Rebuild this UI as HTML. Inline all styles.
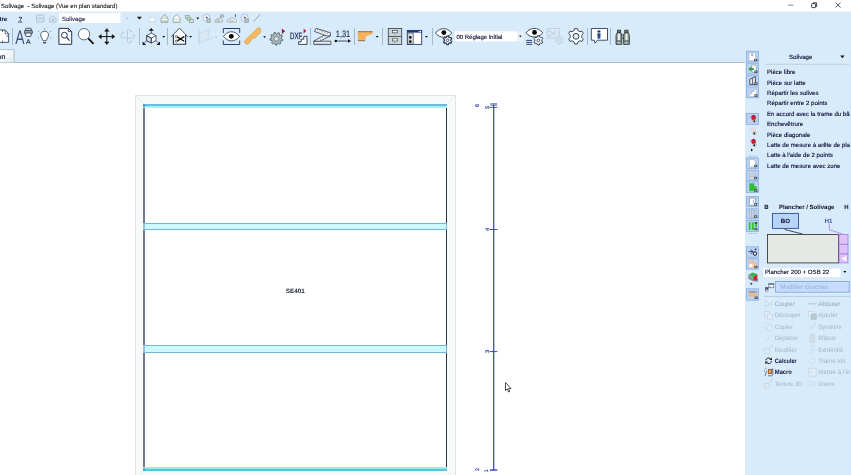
<!DOCTYPE html>
<html><head><meta charset="utf-8">
<style>
*{margin:0;padding:0;box-sizing:border-box}
html,body{width:851px;height:475px;overflow:hidden;background:#fff;font-family:"Liberation Sans",sans-serif;}
#app{position:relative;width:851px;height:475px;overflow:hidden;background:#fff}
.abs{position:absolute}
#title{left:0;top:0;width:851px;height:12px;background:#fff}
#title .t{will-change:transform;left:1px;top:1.7px;font-size:6.05px;line-height:10px;color:#111;white-space:pre;-webkit-text-stroke:0.08px #111;text-rendering:geometricPrecision}
#tb{left:0;top:12px;width:851px;height:50px;background:#d8ebfa}
#tbline{left:0;top:62px;width:745px;height:1px;background:#a9bec8}
#rp{left:745px;top:50px;width:106px;height:425px;background:#d8ebfa}
.txt{position:absolute;white-space:nowrap;font-size:7px;line-height:10px;color:#10103a}
svg{position:absolute;left:0;top:0;overflow:visible;will-change:transform}
svg text{text-rendering:geometricPrecision}
</style></head><body>
<div id="app">
<div id="title" class="abs"><div class="abs t">Solivage  - Solivage (Vue en plan standard)</div></div>
<div class="abs" style="left:0;top:11px;width:851px;height:1px;background:#edf5fd"></div>
<div id="tb" class="abs"></div>
<div id="tbline" class="abs"></div>
<div id="rp" class="abs"></div>
<svg id="cv" width="851" height="475" viewBox="0 0 851 475">
<g shape-rendering="crispEdges">
<rect x="135.5" y="95.5" width="320" height="390" fill="#f8fafa" stroke="#dbe3e3" stroke-width="1"/>
<rect x="145" y="104" width="301" height="367" fill="#fff"/>
</g>
<path d="M135.5 95.5L144 104M455.5 95.5L447 104M135.5 479.5L144 471M455.5 479.5L447 471" stroke="#e3e8ec" stroke-width="0.9" fill="none"/>
<g shape-rendering="crispEdges">
<rect x="143" y="104" width="2" height="367" fill="#717a88"/>
<rect x="446" y="104" width="1" height="367" fill="#2c3650"/>
<!-- beams -->
<rect x="143" y="104" width="304" height="2" fill="#6abcde"/>
<rect x="143" y="106" width="304" height="2" fill="#a4f2ec"/>
<rect x="143" y="104" width="2" height="3" fill="#4a98e0"/>
<rect x="143" y="223" width="304" height="7" fill="#cdf9fc"/><rect x="143" y="223" width="304" height="1" fill="#70b8d0"/><rect x="143" y="229" width="304" height="1" fill="#70b8d0"/><rect x="143" y="223" width="2" height="7" fill="#8cc6ee"/><rect x="446" y="223" width="1" height="7" fill="#6cb4e6"/>
<rect x="143" y="345" width="304" height="8" fill="#cdf9fc"/><rect x="143" y="345" width="304" height="1" fill="#70b8d0"/><rect x="143" y="352" width="304" height="1" fill="#70b8d0"/><rect x="143" y="345" width="2" height="8" fill="#8cc6ee"/><rect x="446" y="345" width="1" height="8" fill="#6cb4e6"/>
<rect x="143" y="467" width="304" height="2" fill="#98f0e4"/>
<rect x="143" y="469" width="304" height="2" fill="#68badf"/>
<rect x="143" y="468" width="2" height="3" fill="#58a8e4"/>
</g>
<text x="295.3" y="293.4" font-size="6.3" font-weight="bold" fill="#222a38" text-anchor="middle" font-family="Liberation Sans, sans-serif">SE401</text>
<!-- dimension -->
<g stroke="#3848b4" fill="none">
<path d="M493.7 104.5V470" stroke-width="1.25"/>
<path d="M489.6 229.5H497.4M489.6 351.6H497.4" stroke-width="1"/>
<path d="M490.2 105.1H497.2M489.4 107.4H497.2" stroke-width="0.9"/>
<path d="M490 470H497.2" stroke-width="1.5"/>
</g>
<rect x="490.3" y="103" width="6.8" height="1.5" fill="#8e9cae"/>
<g font-family="Liberation Sans, sans-serif" font-size="5.2" fill="#2a3aa8" stroke="#2a3aa8" stroke-width="0.2">
<text transform="translate(478.6,105.6) rotate(-90)" text-anchor="middle">6</text>
<text transform="translate(489.2,107.2) rotate(-90)" text-anchor="middle">5</text>
<text transform="translate(489,229.4) rotate(-90)" text-anchor="middle">4</text>
<text transform="translate(489,351.4) rotate(-90)" text-anchor="middle">3</text>
<text transform="translate(478.6,469.6) rotate(-90)" text-anchor="middle">2</text>
<text transform="translate(488.4,470.8) rotate(-90)" text-anchor="middle">1</text>
</g>
<!-- cursor -->
<path d="M505.5 382.5V390.5L507.3 389L508.6 392L509.8 391.5L508.6 388.6H511Z" fill="#fff" stroke="#222" stroke-width="0.8" stroke-linejoin="round"/>
</svg>
<svg id="tbs" width="851" height="64" viewBox="0 0 851 64" font-family="Liberation Sans, sans-serif">
<!-- menu row -->
<text x="-4" y="20.8" font-size="6.1" font-weight="bold" fill="#10103a">être</text>
<text x="18.4" y="20.8" font-size="6.1" font-weight="bold" fill="#10103a">?</text>
<rect x="18.2" y="21.6" width="4" height="0.8" fill="#10103a"/>
<g stroke="#a9bdd2" fill="none" stroke-width="0.9">
<rect x="36.5" y="15" width="7.5" height="7" rx="1" fill="#d2e4f4"/>
<path d="M38 18.5H42.5"/>
<path d="M49.5 22V18.5L52.7 16L56 18.5V22Z" fill="#e0edf9"/>
<path d="M51.3 19.3H54.2L52.7 21Z" fill="#b4c6d8"/>
</g>
<rect x="59" y="13" width="61.5" height="10" fill="#fff"/>
<text x="61.9" y="20.5" font-size="6.1" fill="#10103a" stroke="#10103a" stroke-width="0.08">Solivage</text>
<path d="M125.3 19.3L127.2 17L129.1 19.3Z" fill="#bccbdc"/>
<path d="M136.9 16.7H141.9L139.4 19.6Z" fill="#111"/>
<!-- faded house -->
<path d="M148.7 22.2V18.4L152.1 15.4L155.5 18.4V22.2Z" fill="#e2edf8" stroke="#c6d4e2" stroke-width="0.7"/>
<rect x="149.2" y="19" width="5.8" height="1.2" fill="#fff"/>
<path d="M161 22.4V18L164.5 14.4L168 18V22.4Z" fill="#bfcfc2" stroke="#98a6a4" stroke-width="0.8"/>
<path d="M161.6 18L164.5 15.2L167.4 18Z" fill="#dfe8e2"/>
<rect x="161.5" y="18.9" width="6" height="1.3" fill="#fff"/>
<path d="M173.2 22.4V18L176.7 14.4L180.2 18V22.4Z" fill="#c4d0c8" stroke="#98a6a4" stroke-width="0.8"/>
<path d="M173.9 18L176.7 15.2L179.5 18Z" fill="#fff"/>
<rect x="173.7" y="18.3" width="6" height="1.1" fill="#fff"/><rect x="173.7" y="20.3" width="6" height="1.1" fill="#fff"/>
<!-- layers icon -->
<g stroke="#8c9aa0" fill="#e8eef0" stroke-width="0.7">
<rect x="185.4" y="15.6" width="3.8" height="2.8" fill="#d0d8dc"/>
<rect x="187.2" y="17.8" width="3.8" height="2.6" fill="#bfe0b8" stroke="#7ea884"/>
<rect x="189.4" y="19.6" width="4" height="2.8" fill="#d4e4d4"/>
</g>
<path d="M196.4 17.6H199.2L197.8 19.4Z" fill="#111"/>
<g stroke="#9fb3dd" fill="#e4effb" stroke-width="0.7">
<circle cx="206.5" cy="17.8" r="3.7"/>
<circle cx="244.5" cy="17.8" r="3.7"/>
</g>
<g stroke="#6d7a78" stroke-width="0.6">
<rect x="207" y="19" width="3.2" height="3.2" fill="#c4d0c4"/>
<rect x="245" y="19" width="3.2" height="3.2" fill="#c4d0c4"/>
</g>
<circle cx="206.8" cy="17.6" r="0.8" fill="#223"/><circle cx="244.8" cy="17.6" r="0.8" fill="#223"/>
<g stroke="#8a98a4" stroke-width="0.7">
<path d="M215.2 22.2C214.4 20 216.4 18.6 218 19C218.6 17.6 220.4 17.6 221 18.8C222.6 18.8 223 21 222.2 22.2Z" fill="#e8ecee"/>
<ellipse cx="218.4" cy="20.8" rx="1.8" ry="1" fill="#d4dcd0" stroke-width="0.5"/>
<path d="M220.6 18.4V14.6" fill="none"/>
<path d="M220.8 14.8H223.8V17.2H220.8Z" fill="#b8c8bc" stroke-width="0.5"/>
<path d="M227.4 22C226.4 20.2 227.8 18.8 229.6 19C230.2 17.4 233 17 234 18.6C236 18.2 237 20.2 236.2 22Z" fill="#f4f6f6"/>
<ellipse cx="231.6" cy="20.6" rx="2" ry="0.9" fill="#e4e8dc" stroke-width="0.4"/>
</g>
<path d="M235.4 14.4V16.8" stroke="#2a3444" stroke-width="0.9"/>
<path d="M253.5 21.6L260 14.6" stroke="#7f95bb" stroke-width="0.8"/>
</svg>

<svg id="tbs2" width="851" height="64" viewBox="0 0 851 64" font-family="Liberation Sans, sans-serif">
<!-- separators -->
<path d="M12.5 28V44.5M139.5 28V44.5M167.5 28V44.5M310.5 28V44.5M354.5 28V44.5M382.5 28V44.5M432.5 28V44.5M587.5 28V44.5M610.5 28V44.5" stroke="#a4b9cc" stroke-width="1" shape-rendering="crispEdges"/>
<!-- page icon -->
<path d="M-1 30H5.2L8.6 33.8V42.4H-1Z" fill="#fff" stroke="#2a3a52" stroke-width="0.85"/>
<path d="M5.2 30V33.8H8.6" fill="none" stroke="#2a3a52" stroke-width="0.7"/>
<path d="M2.6 30V32M2.6 40.5V42.5M6.5 36H8.5" stroke="#2a3a52" stroke-width="0.8"/>
<!-- AA printer -->
<text x="15.2" y="44.1" font-size="19.7" fill="#43537a" textLength="9.3" lengthAdjust="spacingAndGlyphs">A</text>
<text x="26" y="44.2" font-size="6.8" fill="#2a3a5a" stroke="#2a3a5a" stroke-width="0.2" textLength="4.6" lengthAdjust="spacingAndGlyphs">A</text>
<g stroke="#2a3a5a" stroke-width="0.9">
<rect x="25.6" y="28.3" width="5.6" height="2.2" rx="0.6" fill="#fff"/>
<rect x="24.5" y="30.3" width="7.8" height="3.6" rx="1" fill="#9aa4a0"/>
<rect x="25.8" y="33" width="5.2" height="3.4" rx="0.6" fill="#fff"/>
</g>
<!-- bulb -->
<g stroke="#2a3a52" fill="none" stroke-width="0.8">
<path d="M44.6 31.2C47.2 31.2 48.5 33 48.5 34.8C48.5 37 47 38.4 46.2 40.7H43C42.2 38.4 40.7 37 40.7 34.8C40.7 33 42 31.2 44.6 31.2Z" fill="#fff"/>
<path d="M44.6 28.2V29.7M38 30.9L39.3 32M51.2 30.9L49.9 32M37.8 38.4L39 37.6M51.4 38.4L50.2 37.6" stroke="#6a7a92" stroke-width="0.7"/>
<path d="M43.2 42.8H46" stroke="#111" stroke-width="1.1"/>
</g>
<!-- page magnifier -->
<path d="M58.9 28.4H68.3L71.7 31.6V44.3H58.9Z" fill="#fff" stroke="#22304e" stroke-width="1"/>
<path d="M68.3 28.4V31.6H71.7" fill="none" stroke="#22304e" stroke-width="0.8"/>
<circle cx="64.4" cy="35.2" r="2.9" fill="#fff" stroke="#22304e" stroke-width="1"/>
<path d="M66.5 37.4L69.6 40.6" stroke="#22304e" stroke-width="1.3"/>
<!-- magnifier -->
<circle cx="84" cy="34.2" r="5.7" fill="#fbfdfd" stroke="#3c4c62" stroke-width="0.8"/>
<path d="M88.2 38.4L93.6 43.8" stroke="#111" stroke-width="1.7"/>
<!-- move cross -->
<g stroke="#111" stroke-width="1" fill="#111">
<path d="M106.8 30.5V42.5M100.5 36.6H113"/>
<path d="M106.8 28.6L108.9 31.3H104.7Z M106.8 44.6L108.9 41.9H104.7Z M98.6 36.6L101.3 34.5V38.7Z M114.8 36.6L112.1 34.5V38.7Z" stroke-width="0.5"/>
</g>
<!-- faded axes -->
<g stroke="#aac6da" fill="none" stroke-width="0.8">
<path d="M131 31.2C129.6 29 127.5 29.4 127.5 31.6V41.2C127.5 43.6 129.6 43.8 131 41.8"/>
<path d="M123 32.8C120.6 33.4 119.6 37.8 123 38H133.4C135.4 38 135.2 35.6 133.4 35"/>
<path d="M130.2 31.6H131.6V30.2M130.2 41.2H131.6V42.6M122.2 32.4L123.4 32.2V33.6M132.6 34.6H134V36" stroke-width="0.7"/>
</g>
<!-- cube 3d -->
<g stroke="#22304e" stroke-width="0.75" fill="#fff" stroke-linejoin="round">
<path d="M146.6 35.6L151.3 33.2L156 35.6V40.6L151.3 43L146.6 40.6Z"/>
<path d="M146.6 35.6L151.3 38V43L146.6 40.6Z" fill="#dcdfe4"/>
<path d="M146.6 35.6L151.3 38L156 35.6M151.3 38V43" fill="none"/>
<path d="M151.3 30.5V33.2M146.6 40.6L144.6 42.8M156 40.6L158 42.8" fill="none"/>
</g>
<path d="M151.2 28L153.8 30.7H148.6Z M142.6 45V41.4L146.2 45Z M160 45V41.4L156.4 45Z" fill="#111"/>
<path d="M162.2 36H165.2L163.7 37.8Z" fill="#111"/>
<!-- house scissors -->
<path d="M173.4 44.3V34.6L179.5 28.1L185.6 34.6V44.3Z" fill="#fff" stroke="none"/>
<path d="M171.2 36.8L179.5 28.1L187.8 36.8" fill="none" stroke="#22304e" stroke-width="0.8"/>
<path d="M173.4 34.8V44.2H185.6V34.8" fill="none" stroke="#22304e" stroke-width="1.1"/>
<g stroke="#111" fill="none" stroke-linecap="round">
<path d="M177.6 37.2L183.8 41M177.6 40.6L183.8 36.8" stroke-width="1.4"/>
<circle cx="176.4" cy="36.6" r="1.1" stroke="#4a5a4a" stroke-width="0.8"/><circle cx="176.4" cy="41.2" r="1.1" stroke="#4a5a4a" stroke-width="0.8"/>
</g>
<path d="M189.1 36H192.1L190.6 37.8Z" fill="#111"/>
<!-- faded plane -->
<g stroke="#bdd2e4" fill="#d9e9f7" stroke-width="0.7">
<path d="M198.8 33.6L209 29.7V38.8L198.8 43.2Z"/>
<path d="M199.2 43.6V29.5M208.8 39.8L212.4 37.6" fill="none"/>
<path d="M198.2 30.5L199.2 29.3L200.2 30.5M211 37.2L212.5 37.5L212 38.8" fill="none"/>
<path d="M199.5 35.5L208.6 32.3M199.5 38L208.6 34.8M199.5 40.5L208.6 37.3" stroke="#cfe0ee" stroke-width="0.5"/>
</g>
<path d="M214.8 36.6H217.4L216.1 38Z" fill="#aabccc"/>
<!-- eye frame -->
<g stroke="#2a4068" fill="none" stroke-width="1">
<path d="M223.3 33V28.5H239.7V33M223.3 40.5V44.5H239.7V40.5"/>
</g>
<path d="M223.5 36.4C226.5 32.6 229 31.8 231.4 31.8C234 31.8 236.5 32.8 239.6 36.4C236.5 40 234 40.8 231.4 40.8C229 40.8 226.5 40 223.5 36.4Z" fill="#fff" stroke="#2a3a52" stroke-width="0.9"/>
<circle cx="231.3" cy="36.3" r="2.4" fill="#000"/>
<!-- wood piece -->
<path d="M244.1 41.3L257.6 28.1H260.3L260.6 32.2L255.3 37.8L252 38.4L250.9 41L248.2 44.3L245.9 44Z" fill="#f8b85c" stroke="#b89058" stroke-width="0.5" stroke-linejoin="round"/>
<path d="M263.2 36.2H266L264.6 38Z" fill="#111"/>
<!-- gear w/ arrow -->
<g transform="translate(276.4,38.7)">
<path d="M4.70 0.00L6.36 0.67L6.01 2.19L4.22 2.06L3.60 3.02L4.45 4.60L3.20 5.54L1.91 4.29L0.82 4.63L0.45 6.38L-1.11 6.30L-1.30 4.52L-2.35 4.07L-3.76 5.18L-4.90 4.11L-3.90 2.63L-4.42 1.61L-6.21 1.55L-6.40 0.00L-4.67 -0.49L-4.42 -1.61L-5.75 -2.81L-4.90 -4.11L-3.26 -3.38L-2.35 -4.07L-2.60 -5.85L-1.11 -6.30L-0.33 -4.69L0.82 -4.63L1.76 -6.15L3.20 -5.54L2.76 -3.80L3.60 -3.02L5.31 -3.58L6.01 -2.19L4.56 -1.14Z" fill="#b6c2c4" stroke="#3c4c58" stroke-width="0.75" stroke-linejoin="round"/>
<circle r="2.6" fill="#c8d2d4" stroke="#4f5f6c" stroke-width="0.7"/>
<circle r="1.1" fill="#fff"/>
</g>
<path d="M281.7 28.4L285.2 31.3L282 33.7Z" fill="#8e1858"/>
<path d="M282.2 33L281.6 35" stroke="#3c4a66" stroke-width="0.6"/>
</svg>

<svg id="tbs3" width="851" height="64" viewBox="0 0 851 64" font-family="Liberation Sans, sans-serif">
<!-- DXF -->
<text x="290" y="39" font-size="9.2" fill="#1c2c5c" stroke="#1c2c5c" stroke-width="0.25" textLength="12.4" lengthAdjust="spacingAndGlyphs">DXF</text>
<path d="M303.6 28.6L306.2 31L303.6 33.4Z" fill="#b01848"/>
<path d="M298.6 44.4V41.8H301.2V39.2H303.8V36.4H307V44.4Z" fill="#fff" stroke="#22304e" stroke-width="0.9"/>
<!-- folding ruler -->
<g stroke="#2a3a52" stroke-width="0.8" fill="#f4f6f4" stroke-linejoin="round">
<path d="M313.8 41.2H330.8V44.6H313.8Z"/>
<path d="M313.8 41.2L327 33.4L330.4 35.8L319.8 41.2Z"/>
<path d="M314.4 31.4L316.2 28.4L330.4 32.8L330.4 35.8L327 36Z"/>
</g>
<g stroke="#3a4a5a" stroke-width="0.5">
<path d="M316 42.8V44.4M318 42.8V44.4M320 42.8V44.4M322 42.8V44.4M324 42.8V44.4M326 42.8V44.4M328 42.8V44.4"/>
<path d="M318 29.2L317.4 30.8M320.4 30L319.8 31.6M322.8 30.8L322.2 32.4M325.2 31.6L324.6 33.2M327.6 32.4L327 34"/>
<path d="M319.6 38.2L320.6 39.6M322 36.8L323 38.2M324.4 35.4L325.4 36.8"/>
</g>
<!-- 1,31 -->
<text x="335.8" y="36.7" font-size="9.2" fill="#1c2c4c" stroke="#1c2c4c" stroke-width="0.15" textLength="14.4" lengthAdjust="spacingAndGlyphs">1,31</text>
<path d="M335.6 41H349" stroke="#22304e" stroke-width="0.8"/>
<circle cx="335.8" cy="41" r="1.2" fill="#111"/>
<path d="M351 41L348 39.2V42.8Z" fill="#111"/>
<!-- orange moulding -->
<path d="M358 31.7H372.6L372 34L369 35L366 36.2L365 40.6H358Z" fill="#f6b259" stroke="#f6b259" stroke-width="0.4"/>
<path d="M358 31.7H372.6M358 40.7H365" stroke="#5a4a3a" stroke-width="0.7"/>
<path d="M375.8 36H378.6L377.2 37.8Z" fill="#111"/>
<!-- cabinet -->
<g stroke="#3c4c5c" stroke-width="0.9" fill="#ccd4d6">
<rect x="388.3" y="28.5" width="13.4" height="16"/>
<path d="M388.3 36.5H401.7"/>
<rect x="392.6" y="30.6" width="4.8" height="2.2" fill="#fff" stroke-width="0.7"/>
<rect x="392.6" y="38.8" width="4.8" height="2.2" fill="#fff" stroke-width="0.7"/>
<path d="M395 33.6V34.4M395 41.8V42.6" stroke-width="0.7"/>
</g>
<!-- window -->
<rect x="407.3" y="30.4" width="14.4" height="14" fill="#fff" stroke="#2a3a5a" stroke-width="0.9"/>
<rect x="407.3" y="30.4" width="14.4" height="2.2" fill="#1c3480"/>
<rect x="407.8" y="33" width="5.4" height="11" fill="#d4dade" stroke="#2a3a5a" stroke-width="0.6"/>
<circle cx="410.3" cy="37.4" r="1.3" fill="#000"/><circle cx="410.3" cy="41.6" r="1.3" fill="#000"/>
<rect x="418.6" y="31" width="1" height="1" fill="#fff"/><rect x="420" y="31" width="1" height="1" fill="#fff"/>
<path d="M425 36H427.8L426.4 37.8Z" fill="#111"/>
<!-- eye w/ gear -->
<path d="M435.4 33C438 29.8 441 28.6 443.6 28.6C446.4 28.6 449 29.8 451.8 33C449 36.2 446.4 37.2 443.6 37.2C441 37.2 438 36.2 435.4 33Z" fill="#fff" stroke="#2a3a52" stroke-width="0.9"/>
<circle cx="443.8" cy="32.6" r="2.4" fill="#000"/>
<g transform="translate(447.6,40.3) scale(0.7)">
<path d="M-1.1 -6.1H1.1L1.6 -4.4L3 -3.6L4.7 -4.1L5.8 -2.2L4.6 -0.9V0.9L5.8 2.2L4.7 4.1L3 3.6L1.6 4.4L1.1 6.1H-1.1L-1.6 4.4L-3 3.6L-4.7 4.1L-5.8 2.2L-4.6 0.9V-0.9L-5.8 -2.2L-4.7 -4.1L-3 -3.6L-1.6 -4.4Z" fill="#fff" stroke="#2a3a52" stroke-width="1.7" stroke-linejoin="round"/>
<circle r="1.8" fill="#fff" stroke="#2a3a52" stroke-width="1.2"/>
</g>
<!-- combo -->
<rect x="455" y="31.4" width="62" height="10" fill="#fff"/>
<rect x="517" y="31.4" width="6.4" height="10" fill="#e6f1fb"/>
<text x="456.4" y="38.7" font-size="6" fill="#10103a" stroke="#10103a" stroke-width="0.12">00 Réglage initial</text>
<path d="M519 35.4H521.6L520.3 37.2Z" fill="#111"/>
<!-- eye w/ list gear -->
<path d="M526 32.8C528.6 29.6 531.6 28.4 534.4 28.4C537.2 28.4 540 29.6 542.8 32.8C540 36 537.2 37 534.4 37C531.6 37 528.6 36 526 32.8Z" fill="#fff" stroke="#2a3a52" stroke-width="0.9"/>
<circle cx="534.5" cy="32.4" r="2.4" fill="#000"/>
<path d="M526.2 40.4H532.2M526.2 42.4H532.2M526.2 44.4H532.2" stroke="#22326a" stroke-width="0.9"/>
<g transform="translate(538.4,40.4) scale(0.75)">
<path d="M-1.1 -6.1H1.1L1.6 -4.4L3 -3.6L4.7 -4.1L5.8 -2.2L4.6 -0.9V0.9L5.8 2.2L4.7 4.1L3 3.6L1.6 4.4L1.1 6.1H-1.1L-1.6 4.4L-3 3.6L-4.7 4.1L-5.8 2.2L-4.6 0.9V-0.9L-5.8 -2.2L-4.7 -4.1L-3 -3.6L-1.6 -4.4Z" fill="#fff" stroke="#2a3a52" stroke-width="1.3" stroke-linejoin="round"/>
<circle r="1.8" fill="#fff" stroke="#2a3a52" stroke-width="1.2"/>
</g>
<!-- faded scissors box -->
<g stroke="#b7cbdc" fill="#dbe9f6" stroke-width="0.8">
<rect x="547.2" y="28.5" width="12" height="9.6"/>
<path d="M549.6 31L556.4 35.6M549.6 35.6L556.4 31" fill="none"/>
<circle cx="549.4" cy="30.8" r="0.8"/><circle cx="549.4" cy="35.8" r="0.8"/>
</g>
<g transform="translate(559.2,40.2) scale(0.62)">
<path d="M-1.1 -6.1H1.1L1.6 -4.4L3 -3.6L4.7 -4.1L5.8 -2.2L4.6 -0.9V0.9L5.8 2.2L4.7 4.1L3 3.6L1.6 4.4L1.1 6.1H-1.1L-1.6 4.4L-3 3.6L-4.7 4.1L-5.8 2.2L-4.6 0.9V-0.9L-5.8 -2.2L-4.7 -4.1L-3 -3.6L-1.6 -4.4Z" fill="#dbe9f6" stroke="#b7cbdc" stroke-width="1.3" stroke-linejoin="round"/>
<circle r="1.8" fill="#dbe9f6" stroke="#b7cbdc" stroke-width="1.2"/>
</g>
<!-- big gear -->
<g transform="translate(576,36.3) scale(1.26)">
<path d="M-1.1 -6.1H1.1L1.6 -4.4L3 -3.6L4.7 -4.1L5.8 -2.2L4.6 -0.9V0.9L5.8 2.2L4.7 4.1L3 3.6L1.6 4.4L1.1 6.1H-1.1L-1.6 4.4L-3 3.6L-4.7 4.1L-5.8 2.2L-4.6 0.9V-0.9L-5.8 -2.2L-4.7 -4.1L-3 -3.6L-1.6 -4.4Z" fill="#fff" stroke="#2a3a52" stroke-width="0.75" stroke-linejoin="round"/>
<circle r="2.3" fill="#d8ebfa" stroke="#2a3a52" stroke-width="0.75"/>
</g>
<!-- info bubble -->
<path d="M591.3 28.5H607.5V40.2H597.4L595 43.2L594.2 40.2H591.3Z" fill="#fff" stroke="#2c3a5a" stroke-width="0.9" stroke-linejoin="round"/>
<rect x="597.5" y="30.5" width="2.9" height="2" fill="#16306e"/>
<rect x="597.5" y="33.6" width="2.9" height="5" fill="#1b4fa8"/>
<rect x="597.5" y="33.6" width="2.9" height="1.2" fill="#16306e"/>
<!-- binoculars -->
<g stroke="#2a3636" stroke-width="0.8">
<rect x="617.4" y="30.2" width="3.2" height="2.6" fill="#6a7674"/>
<rect x="624.8" y="30.2" width="3.2" height="2.6" fill="#6a7674"/>
<path d="M617 32.8H621L621.8 35.4V44.4H616V35.4Z" fill="#8e9a98"/>
<path d="M624.4 32.8H628.4L629.4 35.4V44.4H623.6V35.4Z" fill="#8e9a98"/>
<path d="M621.8 35H623.6M621.8 38.2H623.6" stroke="#1c2626" stroke-width="0.9"/>
<path d="M618.9 33.6V40.6M626.5 33.6V40.6" stroke="#eef2f0" stroke-width="2"/>
<path d="M616.4 41H621.4M624 41H629" stroke="#2a3636" stroke-width="0.7"/>
<path d="M618.9 41.8V43.8M626.5 41.8V43.8" stroke="#c4ccca" stroke-width="1.6"/>
</g>
<!-- tab -->
<defs><linearGradient id="tabg" x1="0" y1="0" x2="1" y2="1"><stop offset="0" stop-color="#ffffff"/><stop offset="0.5" stop-color="#f4f8fa"/><stop offset="1" stop-color="#dde6e8"/></linearGradient></defs>
<path d="M-1 62.4V49.6H14.2V62.4" fill="url(#tabg)" stroke="#9fb4c4" stroke-width="0.8"/>
<text x="-2.5" y="58.6" font-size="7" fill="#10103a" stroke="#10103a" stroke-width="0.2">on</text>
</svg>

<!--TOOLBAR4-->
<svg id="rps" width="851" height="475" viewBox="0 0 851 475" font-family="Liberation Sans, sans-serif">
<g stroke="#333" stroke-width="0.8" fill="none"><path d="M788.2 5.2H793.4" stroke="#666"/><path d="M813 3.4V2.8H816.6V6.6H815.8" stroke-width="0.9"/><rect x="811.6" y="3.6" width="4" height="4" rx="0.8" fill="#fff" stroke-width="1"/><path d="M835.6 2.6L840.6 7.6M840.6 2.6L835.6 7.6"/></g>
<rect x="763.4" y="268.4" width="77" height="8.6" fill="#fff"/>
<g font-size="6.1" fill="#0a0a30" stroke="#0a0a30" stroke-width="0.12">
<text x="789" y="59.2">Solivage</text>
<text x="767" y="74.3">Pièce libre</text>
<text x="767" y="84.7">Pièce sur latte</text>
<text x="767" y="95.0">Répartir les solives</text>
<text x="767" y="105.4">Répartir entre 2 points</text>
<text x="767" y="115.7">En accord avec la trame du bâtiment</text>
<text x="767" y="126.1">Enchevêtrure</text>
<text x="767" y="136.5">Pièce diagonale</text>
<text x="767" y="146.8">Latte de mesure à arête de planche</text>
<text x="767" y="157.2">Latte à l'aide de 2 points</text>
<text x="767" y="167.5">Latte de mesure avec zone</text>
<text x="765" y="274.4">Plancher 200 + OSB 22</text>
</g>
<path d="M840.2 55.6H844.6L842.4 58.2Z" fill="#111"/>
<path d="M765.5 64.3H849.5" stroke="#b3c9dc" stroke-width="0.8"/>
<g font-size="6.05" font-weight="bold" fill="#0a0a2a"><text x="764.3" y="208.8">B</text><text x="779" y="208.8">Plancher / Solivage</text><text x="844.3" y="208.8">H</text></g>
<rect x="772.5" y="213.4" width="26" height="15" fill="#b7d3f6" stroke="#2f4f9a" stroke-width="0.9"/>
<text x="785.5" y="223.2" font-size="6.2" font-weight="bold" fill="#0a0a2a" text-anchor="middle">BO</text>
<text x="828.5" y="222.8" font-size="6.2" fill="#22308a" text-anchor="middle" stroke="#22308a" stroke-width="0.12">H1</text>
<path d="M785 228.6V229.6L802.6 234" stroke="#222" stroke-width="0.8" fill="none"/>
<path d="M829.3 223.8V229.7L842.4 234" stroke="#a878e0" stroke-width="0.8" fill="none"/>
<rect x="767.5" y="234.5" width="71" height="28.4" fill="#e5e9e6" stroke="#3a3a3a" stroke-width="0.9"/>
<g fill="#dcc4f8" stroke="#a878e0" stroke-width="0.8"><rect x="839" y="234.5" width="9" height="9.8"/><rect x="839" y="244.3" width="9" height="9.7"/><rect x="839" y="254" width="9" height="8.9"/></g>
<path d="M841.6 258.6L846.4 256V261.2Z" fill="#fff"/>
<path d="M843.2 271H846.4L844.8 273Z" fill="#111"/>
</svg>
<svg id="rps2" width="851" height="475" viewBox="0 0 851 475" font-family="Liberation Sans, sans-serif">
<rect x="775.4" y="281.6" width="73.8" height="10.6" fill="#c6dcfa" stroke="#7c9fe0" stroke-width="0.8"/>
<text x="780.2" y="289.2" font-size="6.4" fill="#8eb0da">Modifier couches</text>
<g stroke="#3a4a62" stroke-width="0.5" fill="#fff"><rect x="768.8" y="283.4" width="5" height="4.4"/><path d="M768.8 284.2H773.8" stroke-width="1"/><rect x="765.6" y="287.6" width="2.4" height="1.5" fill="#556"/><rect x="765.6" y="289.6" width="2.4" height="1.5"/><path d="M768.4 288.4L771.2 286" fill="none"/></g>
<path d="M763.7 296.4H849.5" stroke="#aec4da" stroke-width="0.8"/>
<text x="774.8" y="306.0" font-size="6.3" fill="#8fa6bc" textLength="19.9" lengthAdjust="spacingAndGlyphs">Couper</text>
<text x="818.2" y="306.0" font-size="6.3" fill="#8fa6bc" textLength="22.1" lengthAdjust="spacingAndGlyphs">Abouter</text>
<text x="774.8" y="317.4" font-size="6.3" fill="#9db6cc" textLength="25.8" lengthAdjust="spacingAndGlyphs">Découper</text>
<text x="818.2" y="317.4" font-size="6.3" fill="#9db6cc" textLength="19.4" lengthAdjust="spacingAndGlyphs">Ajouter</text>
<text x="774.8" y="328.8" font-size="6.3" fill="#9db6cc" textLength="18" lengthAdjust="spacingAndGlyphs">Copier</text>
<text x="818.2" y="328.8" font-size="6.3" fill="#9db6cc" textLength="23.5" lengthAdjust="spacingAndGlyphs">Symétrie</text>
<text x="774.8" y="340.2" font-size="6.3" fill="#9db6cc" textLength="23.3" lengthAdjust="spacingAndGlyphs">Déplacer</text>
<text x="818.2" y="340.2" font-size="6.3" fill="#9db6cc" textLength="18.1" lengthAdjust="spacingAndGlyphs">Effacer</text>
<text x="774.8" y="351.6" font-size="6.3" fill="#9db6cc" textLength="22.1" lengthAdjust="spacingAndGlyphs">Modifier</text>
<text x="818.2" y="351.6" font-size="6.3" fill="#9db6cc" textLength="25" lengthAdjust="spacingAndGlyphs">Extrémité</text>
<text x="774.8" y="363.0" font-size="6.3" font-weight="bold" fill="#10103a" textLength="21.9" lengthAdjust="spacingAndGlyphs">Calculer</text>
<text x="818.2" y="363.0" font-size="6.3" fill="#9db6cc" textLength="27.2" lengthAdjust="spacingAndGlyphs">Trame toit</text>
<text x="774.8" y="374.4" font-size="6.3" font-weight="bold" fill="#10103a" textLength="17.1" lengthAdjust="spacingAndGlyphs">Macro</text>
<text x="818.2" y="374.4" font-size="6.3" fill="#9db6cc">Mettre à l'échelle</text>
<text x="774.8" y="385.8" font-size="6.3" fill="#9db6cc" textLength="27.2" lengthAdjust="spacingAndGlyphs">Texture 3D</text>
<text x="818.2" y="385.8" font-size="6.3" fill="#9db6cc" textLength="16.2" lengthAdjust="spacingAndGlyphs">Divers</text>
<g stroke="#c3d5e5" stroke-width="0.8" fill="none" stroke="#a9bccd"><path d="M766.6 301.8L772.6 305.6M766.6 305.8L772.6 302"/><circle cx="765.6" cy="301.6" r="1"/><circle cx="765.6" cy="306" r="1"/></g>
<g stroke="#c3d5e5" stroke-width="0.8" fill="none"><rect x="764.6" y="311.4" width="5" height="5" fill="#e0edf9"/><rect x="767.4" y="314.2" width="5" height="5" fill="#e0edf9"/></g>
<g stroke="#c3d5e5" stroke-width="0.8" fill="none"><rect x="764.6" y="323.0" width="5.4" height="5.4" rx="1" fill="#e0edf9"/><rect x="767" y="325.4" width="5.4" height="5.4" rx="1" fill="#e0edf9"/></g>
<g stroke="#c3d5e5" stroke-width="0.8" fill="none"><path d="M766 341.0L771.6 335.0"/></g>
<g stroke="#c3d5e5" stroke-width="0.8" fill="none"><rect x="764.6" y="348.4" width="5" height="5" fill="#e0edf9"/><path d="M768 349.4L772 345.4"/><circle cx="772" cy="345.8" r="0.9"/></g>
<g stroke="#111" stroke-width="0.9" fill="none"><path d="M765.7 360.4A2.9 2.9 0 0 1 770.6 358.8"/><path d="M771.5 361.2A2.9 2.9 0 0 1 766.6 362.8"/></g><path d="M771.9 357.4V360.1H769.2Z M765.3 364.2V361.5H768Z" fill="#111"/>
<rect x="768.2" y="369.4" width="3.6" height="4.2" fill="#f0a040" stroke="#5a2a1a" stroke-width="0.6"/>
<path d="M764.8 376.2L766.6 371.2M765 368.2H766.4M764.6 370.2V371.6M768 375.8H772.6M772.8 368.2V375.2" stroke="#3a4a6a" stroke-width="0.7" fill="none"/>
<g stroke="#c3d5e5" stroke-width="0.8" fill="none"><rect x="764.6" y="383.6" width="4.6" height="4.2" fill="#dfeaf2"/><path d="M768.6 383.0L771.6 380.0"/><circle cx="771.8" cy="380.2" r="0.9"/></g>
<g stroke="#c3d5e5" stroke-width="0.8" fill="none"><path d="M808.4 303.8H816.4" stroke="#a9bccd"/></g>
<g stroke="#c3d5e5" stroke-width="0.8" fill="none"><rect x="808.6" y="311.4" width="5.2" height="5.4" fill="#e8f2fa"/><rect x="811.2" y="314.2" width="5" height="5" fill="#b9cdd2" stroke="#a6bcc6"/></g>
<g stroke="#c3d5e5" stroke-width="0.8" fill="none"><path d="M809 330.6L815.6 322.6M809.4 325.6L812 328.2M813.4 324.6L815.8 327.2"/></g>
<g stroke="#c3d5e5" stroke-width="0.8" fill="none"><rect x="810" y="335.0" width="4.6" height="7" fill="#d3e0e8"/><path d="M809.4 334.6H815.2M811.4 333.6H813.2"/></g>
<g stroke="#c3d5e5" stroke-width="0.8" fill="none"><path d="M809 345.8H815L810.4 350.0H815M809.4 353.0H813"/></g>
<g stroke="#c3d5e5" stroke-width="0.8" fill="none"><path d="M808.6 360.8L812.4 357.2L816.2 360.8L812.4 364.4Z" stroke-dasharray="1.2 0.8"/></g>
<g stroke="#c3d5e5" stroke-width="0.8" fill="none"><rect x="808.6" y="368.2" width="7.6" height="8" fill="#e0edf9"/><path d="M810 372.2H812M811 371.2V373.2"/></g>
<g stroke="#c3d5e5" stroke-width="0.8" fill="none"><path d="M808.6 380.6L811 383.6L808.6 386.6M811 380.6L813.4 383.6L811 386.6M813.4 380.6L815.8 383.6L813.4 386.6"/></g>
</svg>
<svg id="rps3" width="851" height="475" viewBox="0 0 851 475">
<rect x="746.5" y="51.2" width="12" height="10.8" fill="#bad3f3" stroke="#8badde" stroke-width="0.8"/>
<rect x="746.5" y="63.2" width="12" height="10.8" fill="#bad3f3" stroke="#8badde" stroke-width="0.8"/>
<rect x="746.5" y="75.2" width="12" height="10.6" fill="#bad3f3" stroke="#8badde" stroke-width="0.8"/>
<rect x="746.5" y="87.0" width="12" height="10.8" fill="#bad3f3" stroke="#8badde" stroke-width="0.8"/>
<rect x="746.5" y="113.4" width="12" height="11.0" fill="#bad3f3" stroke="#8badde" stroke-width="0.8"/>
<rect x="746.5" y="157.8" width="12" height="10.6" fill="#bad3f3" stroke="#8badde" stroke-width="0.8"/>
<rect x="746.5" y="170.0" width="12" height="10.4" fill="#bad3f3" stroke="#8badde" stroke-width="0.8"/>
<rect x="746.5" y="181.8" width="12" height="10.8" fill="#bad3f3" stroke="#8badde" stroke-width="0.8"/>
<rect x="746.5" y="196.6" width="12" height="10.2" fill="#bad3f3" stroke="#8badde" stroke-width="0.8"/>
<rect x="746.5" y="208.8" width="12" height="10.2" fill="#bad3f3" stroke="#8badde" stroke-width="0.8"/>
<rect x="746.5" y="220.6" width="12" height="10.8" fill="#bad3f3" stroke="#8badde" stroke-width="0.8"/>
<rect x="746.5" y="246.8" width="12" height="10.4" fill="#bad3f3" stroke="#8badde" stroke-width="0.8"/>
<rect x="746.5" y="258.6" width="12" height="10.6" fill="#bad3f3" stroke="#8badde" stroke-width="0.8"/>
<rect x="746.5" y="288.8" width="12" height="11.4" fill="#bad3f3" stroke="#8badde" stroke-width="0.8"/>
<path d="M749 52.6H751.6V56H753V52.6H755.4V57.4H757V60.8H749Z" fill="#fff" stroke="#7a8aa0" stroke-width="0.4"/><rect x="754.2" y="58.8" width="3" height="2.4" fill="#333c48"/><rect x="755.0" y="59.5" width="1.2" height="1" fill="#e8eef4"/>
<path d="M751.6 65.2L755 64.6L756.4 67.2V72.4H752V69Z" fill="#f4f8f8" stroke="#7a8a90" stroke-width="0.5"/><path d="M748.2 69L751.4 66.6V68.2H754V70H751.4V71.6Z" fill="#2e9a3a"/><rect x="754.4" y="70.6" width="3" height="2.4" fill="#333c48"/><rect x="755.1999999999999" y="71.3" width="1.2" height="1" fill="#e8eef4"/>
<path d="M749.8 84.4V79.4L755.4 76.6V84.4Z" fill="#e8ecf0" stroke="#3a4450" stroke-width="0.9"/><path d="M752.6 78.2V84.4" stroke="#3a4450" stroke-width="0.8"/><rect x="754.4" y="82.4" width="3" height="2.4" fill="#333c48"/><rect x="755.1999999999999" y="83.10000000000001" width="1.2" height="1" fill="#e8eef4"/>
<path d="M749.4 96.4V93.8H751.8V91.4H754.2V89H756.6V96.4Z" fill="#fff" stroke="#8a98a8" stroke-width="0.4"/><rect x="754.4" y="94.4" width="3" height="2.4" fill="#333c48"/><rect x="755.1999999999999" y="95.10000000000001" width="1.2" height="1" fill="#e8eef4"/>
<path d="M748.8 118.4L751.6 116.4" stroke="#a8b0c4" stroke-width="0.6"/><path d="M751.4 116.2L753.4 115.0L755.6 116.2L755.4 119.2L752 119.7Z" fill="#d8182c" stroke="#a01424" stroke-width="0.4" stroke-linejoin="round"/><rect x="753" y="115.0" width="1.2" height="1" fill="#3a2a6a"/><ellipse cx="754.6" cy="121.2" rx="1.7" ry="1.25" fill="#fff" stroke="#555" stroke-width="0.4"/><circle cx="754.3" cy="121.2" r="0.85" fill="#111"/>
<path d="M748.8 130.6L751.6 128.6" stroke="#ccd4de" stroke-width="0.6"/><path d="M751.4 128.4L753.4 127.2L755.6 128.4L755.4 131.4L752 131.9Z" fill="#ecdde4" stroke="#ccc8d0" stroke-width="0.4" stroke-linejoin="round"/><ellipse cx="754.6" cy="133.4" rx="1.7" ry="1.25" fill="#fff" stroke="#555" stroke-width="0.4"/><circle cx="754.3" cy="133.4" r="0.85" fill="#111"/>
<path d="M748.8 142.4L751.6 140.4" stroke="#a8b0c4" stroke-width="0.6"/><path d="M751.4 140.2L753.4 139.0L755.6 140.2L755.4 143.2L752 143.7Z" fill="#d8182c" stroke="#a01424" stroke-width="0.4" stroke-linejoin="round"/><rect x="753" y="139.0" width="1.2" height="1" fill="#3a2a6a"/><ellipse cx="754.6" cy="145.2" rx="1.7" ry="1.25" fill="#fff" stroke="#555" stroke-width="0.4"/><circle cx="754.3" cy="145.2" r="0.85" fill="#111"/>
<path d="M751 148.6L753 150L751 151.4Z" fill="#111"/>
<path d="M748 156H757" stroke="#b0c4d8" stroke-width="0.8"/>
<path d="M749.4 159.4H753.6L755.6 161.4V167H749.4Z" fill="#fff" stroke="#8a98a8" stroke-width="0.5"/><rect x="754.2" y="164.8" width="3" height="2.4" fill="#333c48"/><rect x="755.0" y="165.5" width="1.2" height="1" fill="#e8eef4"/>
<path d="M749.4 171.4H755V179H749.4Z" fill="#d8e2ec" stroke="#9aa8b8" stroke-width="0.5"/><path d="M750.2 173.4H754.2M750.2 175H754.2M750.2 176.6H754.2" stroke="#8a98a8" stroke-width="0.5"/><rect x="754.2" y="176.8" width="3" height="2.4" fill="#333c48"/><rect x="755.0" y="177.5" width="1.2" height="1" fill="#e8eef4"/>
<path d="M749.2 183.2H754.4V186.6H756.8V191.2H749.2Z" fill="#3cc83c"/><path d="M749.6 185H754M749.6 187H756M749.6 189H756" stroke="#2a9a2a" stroke-width="0.5"/><rect x="754.4" y="189.4" width="3" height="2.4" fill="#333c48"/><rect x="755.1999999999999" y="190.1" width="1.2" height="1" fill="#e8eef4"/>
<path d="M749.4 198H755.4V205.4H749.4Z" fill="#fff" stroke="#6a7888" stroke-width="0.6"/><path d="M753.4 199.6V203.6" stroke="#6a7888" stroke-width="0.6"/><rect x="754.2" y="203.2" width="3" height="2.4" fill="#333c48"/><rect x="755.0" y="203.89999999999998" width="1.2" height="1" fill="#e8eef4"/>
<path d="M749.4 210.2H756V217.6H749.4Z" fill="#ccd8e6" stroke="#9aa8b8" stroke-width="0.5"/><path d="M751.6 210.2V217.6M753.8 210.2V217.6" stroke="#8a98a8" stroke-width="0.5"/><rect x="754.2" y="215.4" width="3" height="2.4" fill="#333c48"/><rect x="755.0" y="216.1" width="1.2" height="1" fill="#e8eef4"/>
<path d="M748.8 222.2H750.6V230H748.8ZM751.8 222.2H753.8V230H751.8ZM755 222.2H757V227H755Z" fill="#34c034"/><rect x="754.6" y="222.4" width="2.6" height="1.2" fill="#222"/><rect x="754.4" y="227.8" width="3" height="2.4" fill="#333c48"/><rect x="755.1999999999999" y="228.5" width="1.2" height="1" fill="#e8eef4"/>
<path d="M748 233.4H757" stroke="#b0c4d8" stroke-width="0.8"/>
<path d="M748.4 251.6H753.6M750.6 249.6L753 251.6L750.6 253.8" stroke="#1a2a6a" stroke-width="0.8" fill="none"/><circle cx="755" cy="253.6" r="1.7" fill="#fff" stroke="#111" stroke-width="1"/><circle cx="755.6" cy="249.4" r="0.9" fill="#1a2a6a"/>
<path d="M749.2 260.4H753V263H756.4V267.6H749.2Z" fill="#f6c8a0" stroke="#e0a878" stroke-width="0.4"/><rect x="749.4" y="264" width="3" height="3.2" fill="#fff"/><rect x="754.4" y="265.8" width="3" height="2.4" fill="#333c48"/><rect x="755.1999999999999" y="266.5" width="1.2" height="1" fill="#e8eef4"/>
<path d="M748.2 275L752.6 272.4L757.4 274.2L753.2 277Z" fill="#2eb84a"/><path d="M753.2 277L757.4 274.2V278.4L753.2 281.2Z" fill="#d02028"/><path d="M748.2 275L753.2 277V281.2L748.2 279Z" fill="#8a98a8"/><rect x="754.6" y="279" width="3" height="2.4" fill="#333c48"/><rect x="755.4" y="279.7" width="1.2" height="1" fill="#e8eef4"/>
<path d="M750.6 282.4L752.6 283.7L750.6 285Z" fill="#111"/>
<rect x="748.6" y="290.8" width="8.2" height="2.2" fill="#9aa4ae"/><rect x="748.6" y="293.4" width="8.2" height="3" fill="#f2b870"/><rect x="754.6" y="296.6" width="3" height="2.4" fill="#333c48"/><rect x="755.4" y="297.3" width="1.2" height="1" fill="#e8eef4"/>
</svg>
<div class="abs" style="left:849.5px;top:50px;width:1.5px;height:425px;background:#d2e6fa"></div>
<!--PANEL4-->
</div>
</body></html>
